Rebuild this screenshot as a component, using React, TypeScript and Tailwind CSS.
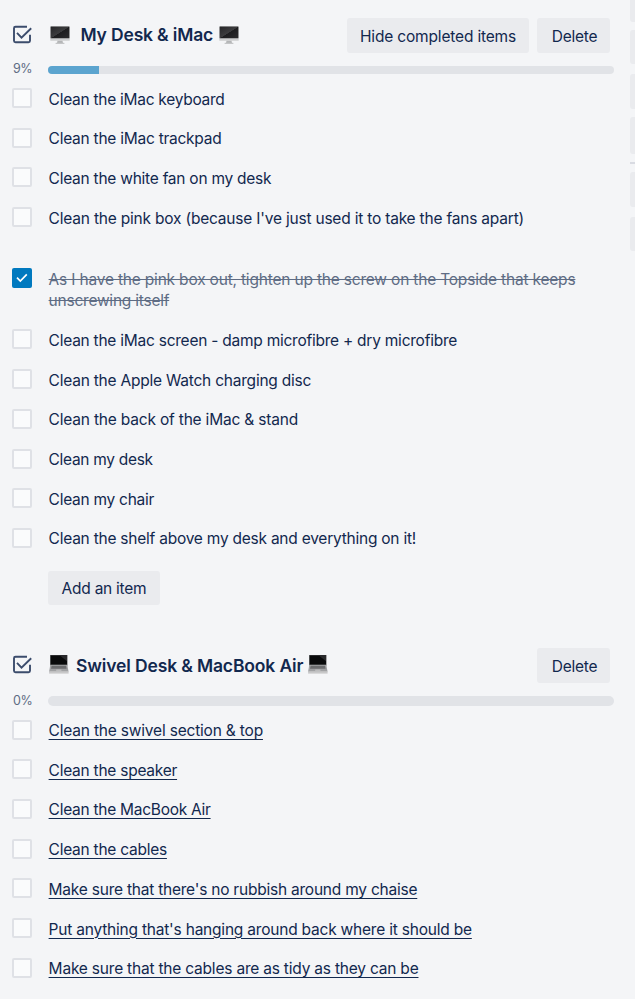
import React from "react";

type Line = { text: string; tracking: string };
type Item = { lines: Line[]; checked?: boolean; tall?: boolean };

const deskItems: Item[] = [
  { lines: [{ text: "Clean the iMac keyboard", tracking: "tracking-[-0.27px]" }] },
  { lines: [{ text: "Clean the iMac trackpad", tracking: "tracking-[-0.25px]" }] },
  { lines: [{ text: "Clean the white fan on my desk", tracking: "tracking-[-0.25px]" }] },
  { lines: [{ text: "Clean the pink box (because I've just used it to take the fans apart)", tracking: "tracking-[-0.2px]" }], tall: true },
  {
    lines: [
      { text: "As I have the pink box out, tighten up the screw on the Topside that keeps", tracking: "tracking-[-0.19px]" },
      { text: "unscrewing itself", tracking: "tracking-[-0.23px]" },
    ],
    checked: true,
    tall: true,
  },
  { lines: [{ text: "Clean the iMac screen - damp microfibre + dry microfibre", tracking: "tracking-[-0.243px]" }] },
  { lines: [{ text: "Clean the Apple Watch charging disc", tracking: "tracking-[-0.22px]" }] },
  { lines: [{ text: "Clean the back of the iMac & stand", tracking: "tracking-[-0.19px]" }] },
  { lines: [{ text: "Clean my desk", tracking: "tracking-[-0.3px]" }] },
  { lines: [{ text: "Clean my chair", tracking: "tracking-[-0.27px]" }] },
  { lines: [{ text: "Clean the shelf above my desk and everything on it!", tracking: "tracking-[-0.235px]" }] },
];

const swivelItems: Item[] = [
  { lines: [{ text: "Clean the swivel section & top", tracking: "tracking-[-0.19px]" }] },
  { lines: [{ text: "Clean the speaker", tracking: "tracking-[-0.25px]" }] },
  { lines: [{ text: "Clean the MacBook Air", tracking: "tracking-[-0.27px]" }] },
  { lines: [{ text: "Clean the cables", tracking: "tracking-[-0.25px]" }] },
  { lines: [{ text: "Make sure that there's no rubbish around my chaise", tracking: "tracking-[-0.225px]" }] },
  { lines: [{ text: "Put anything that's hanging around back where it should be", tracking: "tracking-[-0.21px]" }] },
  { lines: [{ text: "Make sure that the cables are as tidy as they can be", tracking: "tracking-[-0.205px]" }] },
];

function ChecklistIcon() {
  return (
    <svg className="mb-[2px] block h-[19px] w-[21px]" viewBox="0 0 21 19" fill="none" stroke="#3b4c6c" strokeWidth="1.9">
      <path d="M15 1.7H3.5Q2 1.7 2 3.2V15.8Q2 17.3 3.5 17.3H16.5Q18 17.3 18 15.8V9.8" />
      <path d="M5 7.9L9.5 12.6L19.2 3.2" />
    </svg>
  );
}

function Desktop() {
  return (
    <svg className="mb-px block h-[19px] w-[20px] shrink-0" viewBox="0 0 20 19">
      <defs>
        <linearGradient id="screen" x1="0" y1="0" x2="1" y2="1">
          <stop offset="0" stopColor="#252527" />
          <stop offset=".5" stopColor="#3c3c3e" />
          <stop offset=".52" stopColor="#1d1d1f" />
          <stop offset="1" stopColor="#2b2b2d" />
        </linearGradient>
      </defs>
      <rect x=".3" y=".3" width="19.4" height="14.5" rx=".6" fill="#cdcecf" />
      <rect x=".6" y=".5" width="18.8" height="11.8" rx=".3" fill="url(#screen)" />
      <path d="M7.5 14.8h5l.5 2.3H7z" fill="#b3b4b6" />
      <rect x="5.5" y="16.8" width="9" height="1.1" rx=".4" fill="#c4c5c7" />
    </svg>
  );
}

function Laptop() {
  return (
    <svg className="mb-[2px] block h-[19px] w-[20px] shrink-0" viewBox="0 0 20 19">
      <path d="M1 0H18.6V10.6H1z" fill="#77787a" />
      <path d="M1.6 .3H18V9.6H1.6z" fill="#090a0b" />
      <path d="M10.5 .3H18v6z" fill="#29292b" />
      <path d="M1.2 10.2h17.2l1.2 6.5H.1z" fill="#a0a1a3" />
      <path d="M2.6 10.8h14.4l.6 3H2z" fill="#6c6d6f" />
      <path d="M7.3 14.4h5l.3 2H7z" fill="#bcbcbd" />
      <path d="M.1 16.5h19.5V18.6H.1z" fill="#c8c8c9" />
    </svg>
  );
}

function Button({ children, className }: { children: React.ReactNode; className: string }) {
  return (
    <button className={`flex h-[34.5px] items-center justify-center rounded-[3px] bg-[#eaebee] text-[15.5px] whitespace-nowrap text-[#12284e] ${className}`}>
      {children}
    </button>
  );
}

function Row({ item, underlined }: { item: Item; underlined?: boolean }) {
  return (
    <li className={`flex items-start ${item.tall ? "h-[61.2px]" : "h-[39.7px]"}`}>
      {item.checked ? (
        <span className="mr-[16.6px] ml-3 flex size-5 shrink-0 items-center justify-center rounded-[2px] bg-[#0079bf]">
          <svg className="mr-px h-3 w-3" viewBox="0 0 12 12" fill="none" stroke="white" strokeWidth="1.7">
            <path d="M1 5.7L4.3 9L10.8 2.4" />
          </svg>
        </span>
      ) : (
        <span className="mr-[16.6px] ml-3 size-5 shrink-0 rounded-[2px] border-2 border-[#dfe1e6] bg-[#fafbfc]" />
      )}
      <span
        className={`pt-[0.6px] text-[15.5px] leading-[21.5px] whitespace-nowrap ${
          item.checked
            ? "text-[#5e6c84] line-through"
            : underlined
              ? "text-[#12284e] underline decoration-1 underline-offset-[3px]"
              : "text-[#12284e]"
        }`}
      >
        {item.lines.map((line) => (
          <span key={line.text} className={`block ${line.tracking}`}>
            {line.text}
          </span>
        ))}
      </span>
    </li>
  );
}

export default function App() {
  return (
    <div className="flex h-[999px] w-[635px] overflow-hidden bg-[#f4f5f7] font-['Inter','Liberation_Sans',sans-serif] text-[#12284e]">
      <main className="w-[630px] shrink-0">
        <section className="h-[630px] pt-[18px]">
          <header className="flex h-[35px] items-center pr-5 pl-3">
            <ChecklistIcon />
            <h3 className="ml-[17px] flex items-center text-[17.5px] font-semibold whitespace-nowrap">
              <Desktop />
              <span className="mr-[5.5px] ml-[10.5px] tracking-[-0.17px]">My Desk &amp; iMac</span>
              <Desktop />
            </h3>
            <div className="ml-auto flex gap-2">
              <Button className="w-[182px] pt-[2px] tracking-[-0.17px]">Hide completed items</Button>
              <Button className="w-[73px] pt-[2px] pl-[2px] tracking-[-0.26px]">Delete</Button>
            </div>
          </header>
          <div className="mt-[8px] flex h-[18px] items-center">
            <span className="w-12 pb-px pl-[13px] text-[12.5px] tracking-[-0.5px] text-[#5e6c84]">9%</span>
            <div className="h-2 w-[566px] overflow-hidden rounded-[4px] bg-[#e1e3e7]">
              <div className="h-full w-[51px] bg-[#5ba4cf]" />
            </div>
          </div>
          <ul className="mt-[9px]">
            {deskItems.map((item) => (
              <Row key={item.lines[0].text} item={item} />
            ))}
          </ul>
          <Button className="mt-[3px] ml-12 w-28 pt-[2px] tracking-[-0.25px]">Add an item</Button>
        </section>
        <section className="pt-[18px]">
          <header className="flex h-[35px] items-center pr-5 pl-3">
            <ChecklistIcon />
            <h3 className="ml-[16px] flex items-center text-[17.5px] font-semibold whitespace-nowrap">
              <Laptop />
              <span className="mr-[5px] ml-[7px] pt-px tracking-[-0.14px]">Swivel Desk &amp; MacBook Air</span>
              <Laptop />
            </h3>
            <Button className="ml-auto w-[73px] pt-[2px] pl-[2px] tracking-[-0.26px]">Delete</Button>
          </header>
          <div className="mt-[9px] flex h-[18px] items-center">
            <span className="w-12 pl-[13px] text-[12.5px] tracking-[-0.5px] text-[#5e6c84]">0%</span>
            <div className="h-[10px] w-[566px] rounded-[5px] bg-[#e1e3e7]" />
          </div>
          <ul className="mt-[9.5px]">
            {swivelItems.map((item) => (
              <Row key={item.lines[0].text} item={item} underlined />
            ))}
          </ul>
        </section>
      </main>
      <aside className="flex w-[5px] shrink-0 flex-col">
        <div className="h-[22px] rounded-bl-[3px] bg-[#eaebee]" />
        <div className="mt-2 h-[34px] rounded-l-[3px] bg-[#eaebee]" />
        <div className="mt-[10px] h-[35px] rounded-l-[3px] bg-[#eaebee]" />
        <div className="mt-2 h-[37px] rounded-l-[3px] bg-[#eaebee]" />
        <div className="mt-2 h-[2px] bg-[#d9dbe2]" />
        <div className="mt-2 h-[35px] rounded-l-[3px] bg-[#eaebee]" />
        <div className="mt-[10px] h-[34px] rounded-l-[3px] bg-[#eaebee]" />
      </aside>
    </div>
  );
}
